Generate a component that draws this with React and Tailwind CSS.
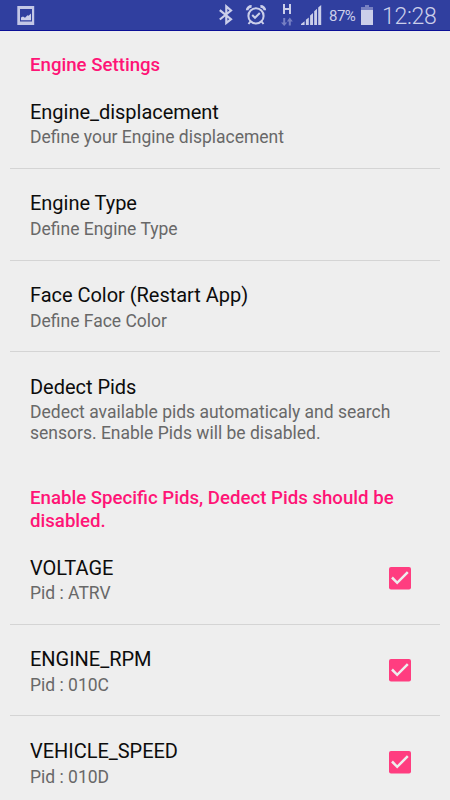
function StatusBar() {
  return (
    <header className="flex h-[31px] w-full shrink-0 items-center border-b border-[#0b0f96] bg-[#303f9f] text-[#cbcfea]">
      <svg className="ml-[17px] mt-px shrink-0" width="18" height="20" viewBox="0 0 18 20">
        <path fill="#c3c7e6" fillRule="evenodd" d="M0.3 0H17.2V19H0.3ZM3 3V15.5H15V3Z" />
        <path fill="#cbcfea" d="M4 14.2V11.5L6 10.5L8 11.7L10.5 9.2L11.6 9.8L14 7.5V14.2Z" />
      </svg>
      <svg className="ml-[183px] shrink-0" width="16" height="22" viewBox="0 0 16 22" fill="none" stroke="currentColor" strokeWidth="2.2">
        <path d="M1.8 6.2L13 15.2L8.3 19V2.4L13 6.5L1.8 15.5" />
      </svg>
      <svg className="ml-[11px] shrink-0" width="22" height="22" viewBox="0 0 22 22" fill="none" stroke="currentColor" strokeWidth="2">
        <circle cx="11" cy="11.9" r="7.6" />
        <path d="M7.2 11L10 13.8L14.8 9" />
        <path d="M2.2 6.3C2.2 4.2 4.2 2.3 6.6 2.4M19.8 6.3C19.8 4.2 17.8 2.3 15.4 2.4" strokeWidth="2.7" />
        <path d="M5.4 17.5L3.5 20M16.6 17.5L18.5 20" />
      </svg>
      <svg className="ml-[13px] shrink-0" width="14" height="26" viewBox="0 0 14 26">
        <path d="M4 2V12M10 2V12M4 7H10" fill="none" stroke="currentColor" strokeWidth="2" />
        <path fill="#7780c3" d="M3.2 16H5.2V20.5H7.2L4.2 24L1 20.5H3.2ZM8.8 23.5H10.8V19.5H12.8L9.8 15.5L6.8 19.5H8.8Z" />
      </svg>
      <svg className="ml-[7px] shrink-0" width="22" height="22" viewBox="0 0 22 22" fill="currentColor">
        <path d="M0 21V20L3.6 17.3V21ZM4.9 21V15.8L7.8 13.5V21ZM9.1 21V11.5L12 9V21ZM13.2 21V7.2L16 4.8V21ZM17.2 21V3.5L20.2 1V21Z" />
      </svg>
      <span className="ml-[6px] mt-[3px] w-[28px] whitespace-nowrap text-[15px] tracking-[-0.5px]">87%</span>
      <svg className="ml-[3px] mt-px shrink-0" width="14" height="22" viewBox="0 0 14 22">
        <path fill="#7881c2" d="M5 0H9V2H13V5H1V2H5Z" />
        <path fill="#cbcfea" d="M1 5H13V20H1Z" />
      </svg>
      <span className="ml-[8px] mt-[3px] whitespace-nowrap text-[23px] leading-[28px] font-light tracking-[-0.3px]">12:28</span>
    </header>
  );
}

function SectionTitle({ children }) {
  return (
    <h2 className="px-[30px] pt-[22.9px] pb-[1.2px] text-[18.65px] leading-[22.2px] font-medium text-[#ff1476]">
      {children}
    </h2>
  );
}

function Checkbox() {
  return (
    <svg className="shrink-0" width="24" height="24" viewBox="0 0 24 24">
      <rect x="1" y="1" width="22" height="22.5" rx="2" fill="#ff3d80" />
      <path d="M4 11.5L9.2 16.8L19.8 6.2" fill="none" stroke="#eeeeee" strokeWidth="2.5" />
    </svg>
  );
}

function Row({ title, summary, checked, last }) {
  return (
    <div
      className={
        "mx-[10px] flex shrink-0 items-start justify-between border-b pt-[21.5px] pr-[28px] pl-[20px] " +
        (summary.length > 50 ? "h-[112.2px] " : "h-[91.7px] ") +
        (last ? "border-transparent" : "border-[#d4d4d4]")
      }
    >
      <div>
        <div className="text-[20px] leading-[26px] tracking-[-0.03px] text-[#0c0c0c]">{title}</div>
        <div className="mt-[2.6px] text-[17.5px] leading-[20.5px] text-[#686868]">{summary}</div>
      </div>
      {checked && (
        <div className="mt-[11.6px]">
          <Checkbox />
        </div>
      )}
    </div>
  );
}

export default function App() {
  return (
    <div className="flex h-[800px] w-[450px] flex-col overflow-hidden bg-[#eeeeee] font-['Roboto',sans-serif]">
      <StatusBar />
      <main className="min-h-0 flex-1 overflow-hidden">
        <div className="h-[46.3px]">
          <SectionTitle>Engine Settings</SectionTitle>
        </div>
        <Row title="Engine_displacement" summary="Define your Engine displacement" />
        <Row title="Engine Type" summary="Define Engine Type" />
        <Row title="Face Color (Restart App)" summary="Define Face Color" />
        <Row
          title="Dedect Pids"
          summary="Dedect available pids automaticaly and search sensors. Enable Pids will be disabled."
          last
        />
        <div className="h-[68.5px]">
          <SectionTitle>Enable Specific Pids, Dedect Pids should be disabled.</SectionTitle>
        </div>
        <Row title="VOLTAGE" summary="Pid : ATRV" checked />
        <Row title="ENGINE_RPM" summary="Pid : 010C" checked />
        <Row title="VEHICLE_SPEED" summary="Pid : 010D" checked last />
      </main>
    </div>
  );
}
